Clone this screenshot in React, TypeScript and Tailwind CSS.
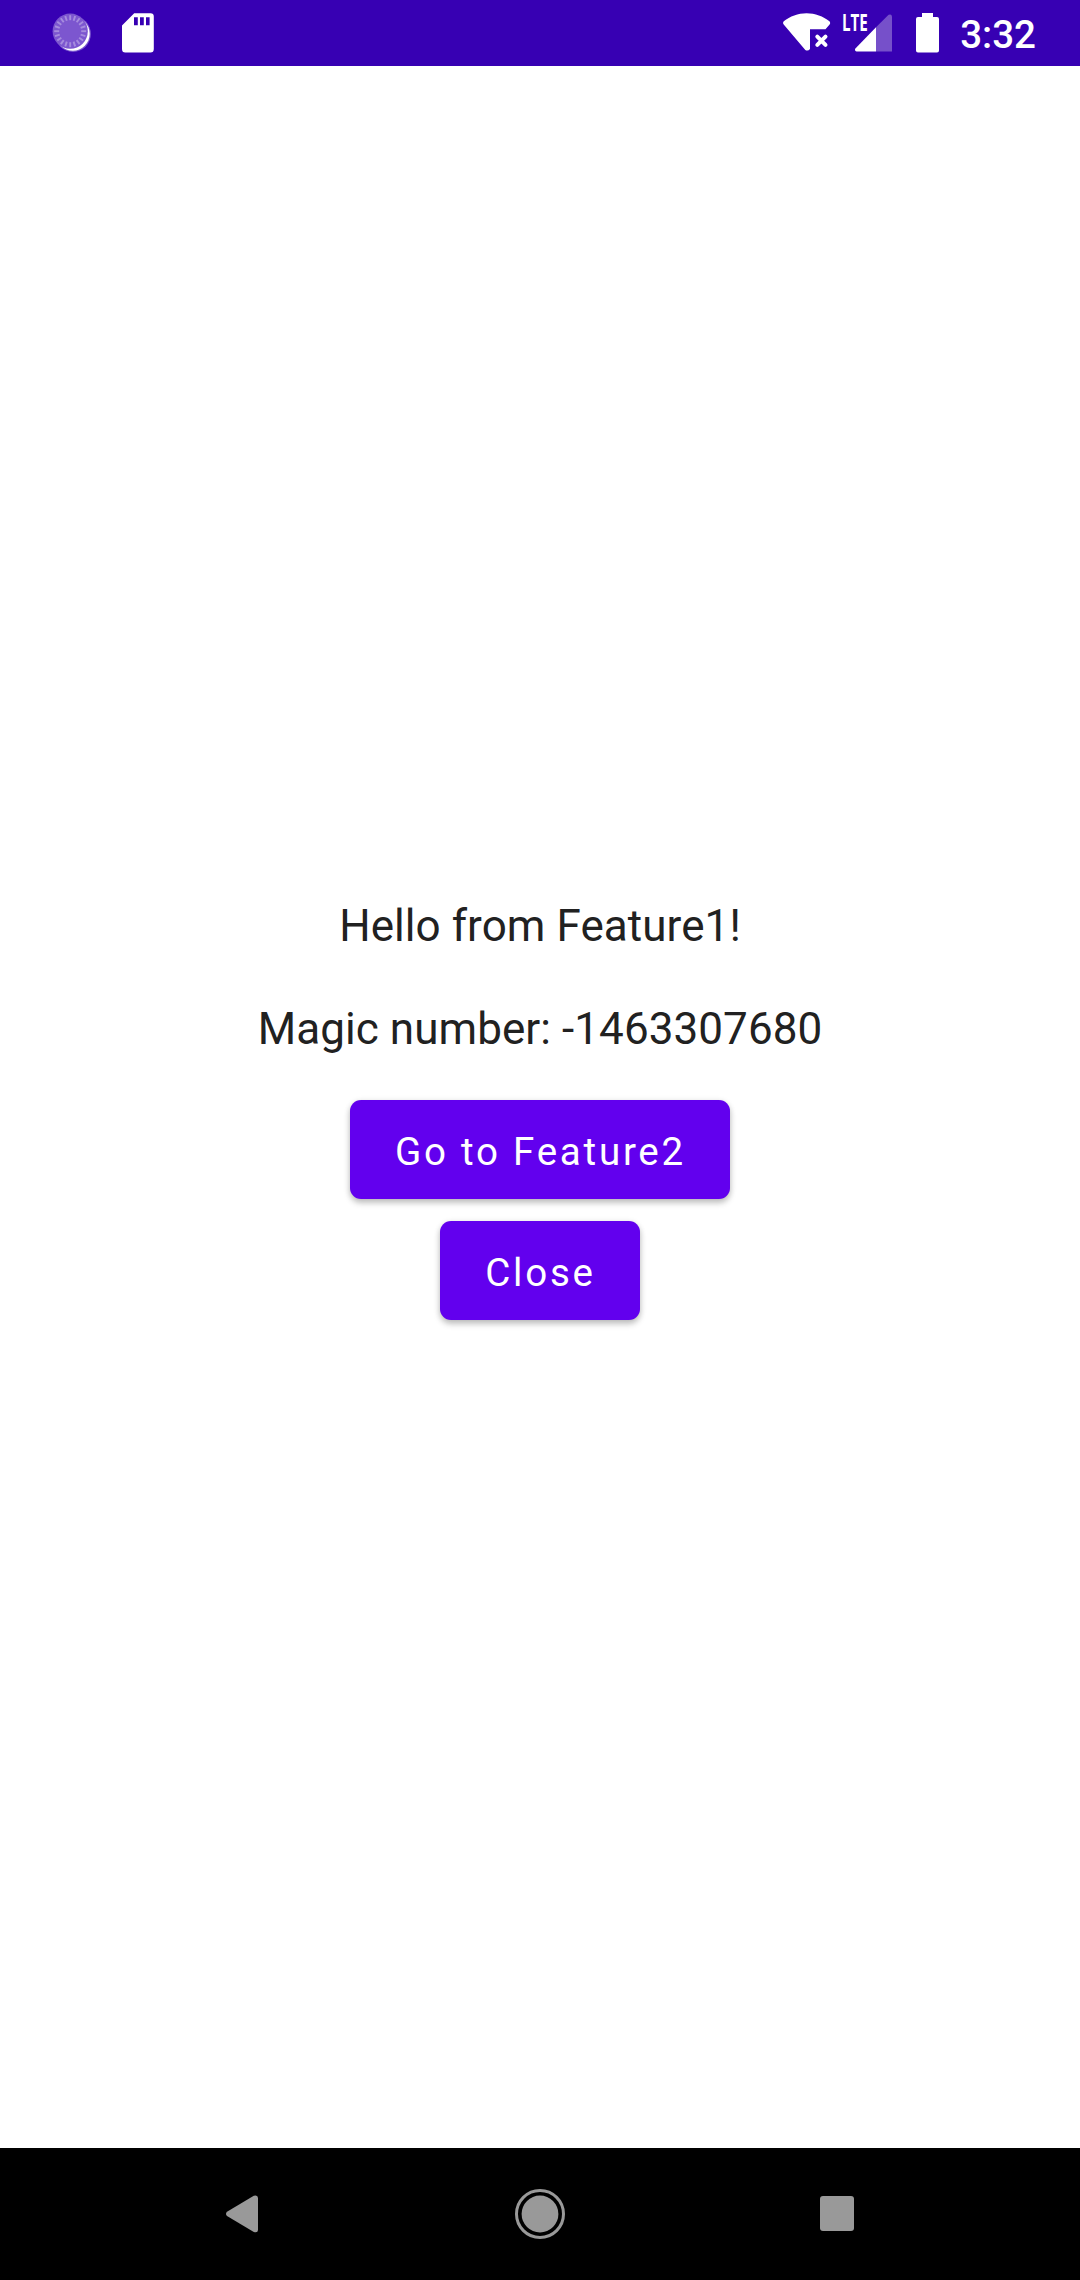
import React from "react";

const ticks = Array.from({ length: 20 }, (_, i) => i * 18);

function SpinnerIcon() {
  return (
    <svg width="40" height="40" viewBox="0 0 40 40">
      <circle cx="21" cy="21" r="17.9" fill="#7a55cf" />
      <circle cx="20.8" cy="20.8" r="16.9" fill="#ffffff" />
      <circle cx="18.2" cy="18.2" r="17.6" fill="#7c56cf" />
      {ticks.map((a) => (
        <path key={a} d="M18.2 2.2V7.2" stroke="#a68cde" strokeWidth="1.9" transform={`rotate(${a} 18.2 18.2)`} />
      ))}
    </svg>
  );
}

function SdCardIcon() {
  return (
    <svg width="33" height="40" viewBox="0 0 33 40">
      <path
        fill="#fff"
        fillRule="evenodd"
        d="M12.2 0.3H28.5Q31.8 0.3 31.8 3.6V36Q31.8 39.5 28.5 39.5H3.3Q0 39.5 0 36V12.5ZM12 4.2V12.2H15.8V4.2ZM18 4.2V12.2H21.8V4.2ZM24 4.2V12.2H27.6V4.2Z"
      />
    </svg>
  );
}

function WifiOffIcon() {
  return (
    <svg width="48" height="40" viewBox="0 0 48 40">
      <path
        fill="#fff"
        d="M0.8 8.3C7 3.3 15 0.2 23.6 0.2S40.2 3.3 46.4 8.3Q47.8 9.8 46.6 11.5L42.5 16.3H27V36Q25 38.5 22.3 37L0.7 11.5Q-0.6 9.8 0.8 8.3Z"
      />
      <path d="M34.3 23.6L42.5 31.8M42.5 23.6L34.3 31.8" stroke="#fff" strokeWidth="4" strokeLinecap="round" />
    </svg>
  );
}

function SignalIcon() {
  return (
    <svg width="38" height="38" viewBox="0 0 38 38">
      <path fill="#fff" d="M21 13.3V37.5H1.5Q-0.8 36.6 0.4 34.4Z" />
      <path fill="#7650ca" d="M21 13.3L33.6 0.8Q36.6 -0.5 37 2.5V37.5H21Z" />
    </svg>
  );
}

function BatteryIcon() {
  return (
    <svg width="23" height="40" viewBox="0 0 23 40">
      <path fill="#fff" d="M6 0H17V4H21Q23 4 23 6V37.6Q23 39.6 21 39.6H2Q0 39.6 0 37.6V6Q0 4 2 4H6Z" />
    </svg>
  );
}

function StatusBar() {
  return (
    <header className="flex h-[66px] shrink-0 items-start bg-[#3700b3] pl-[52px] pr-[44px] text-white">
      <div className="mt-[13px]"><SpinnerIcon /></div>
      <div className="ml-[30px] mt-[13px]"><SdCardIcon /></div>
      <div className="ml-auto mt-[13px]"><WifiOffIcon /></div>
      <div className="relative ml-[24px] mt-[14px]">
        <SignalIcon />
        <span className="absolute left-[-13px] top-[-4px] origin-left scale-x-[0.66] font-['Open_Sans'] text-[23px] leading-[24px] font-bold">LTE</span>
      </div>
      <div className="ml-[23px] mt-[13px]"><BatteryIcon /></div>
      <span className="ml-[21px] mt-[12px] text-[38.5px] leading-[45px] font-medium">3:32</span>
    </header>
  );
}

function ActionButton({ label, width }: { label: string; width: string }) {
  return (
    <button
      className={`flex h-[99px] items-center justify-center rounded-[11px] bg-[#6200ee] pl-px pt-[3px] text-[38.5px] leading-[45px] tracking-[2.75px] text-white shadow-[0_4px_6px_rgba(0,0,0,0.22),0_1px_6px_rgba(0,0,0,0.10)] ${width}`}
    >
      {label}
    </button>
  );
}

function NavigationBar() {
  return (
    <nav className="flex h-[132px] shrink-0 items-start justify-between bg-black pl-[226px] pr-[226px]">
      <svg className="mt-[47px]" width="33" height="38" viewBox="0 0 33 38">
        <path fill="#999" d="M1 16.8L27.8 0.8Q31.8 -0.6 32 3V35Q31.8 38.3 27.8 37L1 21Q-1 18.9 1 16.8Z" />
      </svg>
      <svg className="mt-[41px]" width="50" height="50" viewBox="0 0 50 50">
        <circle cx="25" cy="25" r="18.4" fill="#999" />
        <circle cx="25" cy="25" r="23.5" fill="none" stroke="#999" strokeWidth="3" />
      </svg>
      <div className="mt-[48px] h-[35px] w-[34px] rounded-[3px] bg-[#999]" />
    </nav>
  );
}

export default function App() {
  return (
    <div className="flex h-[2280px] w-[1080px] flex-col bg-white font-[Roboto,sans-serif]">
      <StatusBar />
      <main className="flex flex-1 flex-col items-center justify-center text-[44px] tracking-[0.07px] text-[#212121]">
        <p className="pt-px leading-[103px]">Hello from Feature1!</p>
        <p className="leading-[103px]">Magic number: -1463307680</p>
        <div className="mb-[20px] mt-[19px] flex flex-col items-center gap-[22px]">
          <ActionButton label="Go to Feature2" width="w-[380px]" />
          <ActionButton label="Close" width="w-[200px]" />
        </div>
      </main>
      <NavigationBar />
    </div>
  );
}
